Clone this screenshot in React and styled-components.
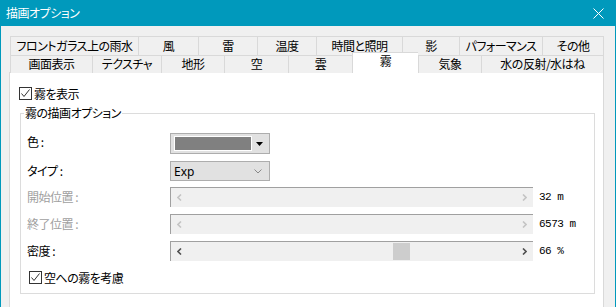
import React from 'react';
import styled, { createGlobalStyle } from 'styled-components';

const Global = createGlobalStyle`
  html, body {
    margin: 0;
    background: #f0f0f0;
  }
  body {
    font-family: "Noto Sans CJK JP", "Noto Sans", sans-serif;
    font-size: 12px;
    font-feature-settings: "palt";
    letter-spacing: -0.5px;
    color: #000;
  }
`;

const Window = styled.div`
  width: 616px;
  height: 307px;
  box-sizing: border-box;
  border-left: 1px solid #0099bc;
  border-right: 1px solid #0099bc;
  background: #f0f0f0;
  display: flex;
  flex-direction: column;
  overflow: hidden;
`;

const TitleBar = styled.div`
  height: 26px;
  flex: none;
  background: #0099bc;
  color: #fff;
  display: flex;
  align-items: center;
  justify-content: space-between;
  padding: 0 11px 0 5px;
  line-height: 14px;
`;

const Body = styled.div`
  flex: 1;
  display: flex;
  flex-direction: column;
  padding: 10px 11px 0 8px;
`;

const TabRow = styled.div`
  display: flex;
  align-items: flex-start;
  height: ${p => p.$h}px;
  margin-left: 1px;
  position: relative;
  z-index: ${p => p.$front ? 1 : 0};
`;

const Tab = styled.div`
  box-sizing: border-box;
  width: ${p => p.$w}px;
  height: ${p => p.$selected ? p.$h + 4 : p.$h + 1}px;
  margin-top: ${p => p.$selected ? -3 : 0}px;
  border-top: 1px solid #d9d9d9;
  border-left: 1px solid #d9d9d9;
  border-right: ${p => p.$last ? '1px solid #d9d9d9' : 'none'};
  background: ${p => p.$selected ? '#fff' : '#f0f0f0'};
  display: flex;
  justify-content: center;
  align-items: ${p => p.$selected ? 'flex-start' : 'center'};
  padding-top: ${p => p.$selected ? 1 : 0}px;
  padding-bottom: ${p => p.$selected ? 0 : 1}px;
  line-height: 14px;
  white-space: nowrap;
  position: relative;
  z-index: ${p => p.$selected ? 2 : 0};
`;

const Panel = styled.div`
  flex: 1;
  background: #fff;
  border: 1px solid #d9d9d9;
  border-bottom: none;
  padding: 14px 8px 0 9px;
`;

const CheckRow = styled.label`
  display: flex;
  align-items: center;
  height: 13px;
  gap: 2px;
  line-height: 14px;
  margin-top: ${p => p.$mt || 0}px;
  margin-left: ${p => p.$ml || 0}px;
`;

const Box = styled.span`
  width: 13px;
  height: 13px;
  box-sizing: border-box;
  border: 1px solid #333;
  background: #fff;
  display: flex;
  align-items: center;
  justify-content: center;
`;

const Group = styled.fieldset`
  margin: 6px 0 0 1px;
  padding: 0 6px 9px 6px;
  border: 1px solid #dcdcdc;
  min-width: 0;
`;

const Legend = styled.legend`
  padding: 0 1px;
  margin-left: -3px;
  line-height: 14px;
`;

const FormRow = styled.div`
  display: flex;
  align-items: center;
  height: ${p => p.$h}px;
  margin-top: ${p => p.$mt}px;
`;

const Label = styled.div`
  width: 143px;
  flex: none;
  line-height: 14px;
  color: ${p => p.$disabled ? '#a0a0a0' : '#000'};
  margin-top: ${p => p.$up ? -4 : 0}px;
`;

const ColorButton = styled.div`
  box-sizing: border-box;
  width: 100px;
  height: 21px;
  border: 1px solid #adadad;
  background: #e1e1e1;
  display: flex;
  align-items: center;
  padding-left: 3px;
  gap: 4px;
`;

const Swatch = styled.div`
  width: 76px;
  height: 13px;
  border: 1px solid #fff;
  background: ${p => p.$color};
`;

const Select = styled.div`
  box-sizing: border-box;
  width: 100px;
  height: 20px;
  border: 1px solid #adadad;
  background: #e1e1e1;
  display: flex;
  align-items: center;
  justify-content: space-between;
  padding: 0 7px 0 3px;
  font-family: "Noto Sans", "Liberation Sans", sans-serif;
  font-size: 12px;
  letter-spacing: 0;
`;

const Track = styled.div`
  box-sizing: border-box;
  width: 363px;
  height: 20px;
  background: #f0f0f0;
  border-top: 1px solid #a0a0a0;
  border-left: 1px solid #a0a0a0;
  display: flex;
  align-items: center;
`;

const Arrow = styled.div`
  width: 17px;
  height: 19px;
  flex: none;
  display: flex;
  align-items: center;
  justify-content: center;
`;

const Rail = styled.div`
  flex: 1;
  height: 19px;
  position: relative;
`;

const Thumb = styled.div`
  position: absolute;
  top: 1px;
  width: 17px;
  height: 17px;
  background: #cdcdcd;
`;

const Value = styled.div`
  margin-left: 6px;
  font-family: "Liberation Mono", "DejaVu Sans Mono", monospace;
  font-size: 11px;
  letter-spacing: -0.5px;
  white-space: pre;
`;

const Check = () => (
  <Box>
    <svg width="11" height="11" viewBox="0 0 11 11">
      <path d="M1.5 5.5 L4 8.5 L9.5 1.5" fill="none" stroke="#333" strokeWidth="1" />
    </svg>
  </Box>
);

const Chevron = ({ dir, color }) => (
  <svg width="5" height="7" viewBox="0 0 5 7">
    <path
      d={dir === 'left' ? 'M4 0.5 L1 3.5 L4 6.5' : 'M1 0.5 L4 3.5 L1 6.5'}
      fill="none"
      stroke={color}
      strokeWidth="1.6"
    />
  </svg>
);

const Slider = ({ value, disabled }) => {
  const c = disabled ? '#c4c4c4' : '#505050';
  return (
    <Track>
      <Arrow><Chevron dir="left" color={c} /></Arrow>
      <Rail>
        {value != null && (
          <Thumb style={{ left: `calc((100% - 17px) * ${value / 100})` }} />
        )}
      </Rail>
      <Arrow><Chevron dir="right" color={c} /></Arrow>
    </Track>
  );
};

const backTabs = [
  ['フロントガラス上の雨水', 128],
  ['風', 60],
  ['雷', 59],
  ['温度', 59],
  ['時間と照明', 86],
  ['影', 57],
  ['パフォーマンス', 83],
  ['その他', 62],
];

const frontTabs = [
  ['画面表示', 82],
  ['テクスチャ', 69],
  ['地形', 63],
  ['空', 64],
  ['雲', 64],
  ['霧', 66],
  ['気象', 63],
  ['水の反射/水はね', 123],
];

const sliders = [
  { label: '開始位置 :', value: '32 m', disabled: true, mt: 6 },
  { label: '終了位置 :', value: '6573 m', disabled: true, mt: 7 },
  { label: '密度 :', value: '66 %', thumb: 66, mt: 7 },
];

export default function App() {
  return (
    <>
      <Global />
      <Window>
        <TitleBar>
          <span>描画オプション</span>
          <svg width="11" height="11" viewBox="0 0 11 11">
            <path d="M0.5 0.5 L10.5 10.5 M10.5 0.5 L0.5 10.5" stroke="#fff" strokeWidth="1" />
          </svg>
        </TitleBar>
        <Body>
          <TabRow $h={19}>
            {backTabs.map(([name, w], i) => (
              <Tab key={name} $w={w} $h={19} $last={i === backTabs.length - 1}>{name}</Tab>
            ))}
          </TabRow>
          <TabRow $h={17} $front>
            {frontTabs.map(([name, w], i) => (
              <Tab key={name} $w={w} $h={17} $last={i === frontTabs.length - 1} $selected={name === '霧'}>
                {name}
              </Tab>
            ))}
          </TabRow>
          <Panel>
            <CheckRow><Check />霧を表示</CheckRow>
            <Group>
              <Legend>霧の描画オプション</Legend>
              <FormRow $h={21} $mt={13}>
                <Label $up>色 :</Label>
                <ColorButton>
                  <Swatch $color="#808080" />
                  <svg width="7" height="4" viewBox="0 0 7 4">
                    <path d="M0 0 H7 L3.5 4 Z" fill="#000" />
                  </svg>
                </ColorButton>
              </FormRow>
              <FormRow $h={20} $mt={7}>
                <Label>タイプ :</Label>
                <Select>
                  <span>Exp</span>
                  <svg width="8" height="5" viewBox="0 0 8 5">
                    <path d="M0.5 0.5 L4 4 L7.5 0.5" fill="none" stroke="#888" strokeWidth="1" />
                  </svg>
                </Select>
              </FormRow>
              {sliders.map(s => (
                <FormRow key={s.label} $h={20} $mt={s.mt}>
                  <Label $disabled={s.disabled}>{s.label}</Label>
                  <Slider value={s.thumb} disabled={s.disabled} />
                  <Value>{s.value}</Value>
                </FormRow>
              ))}
              <CheckRow $mt={10} $ml={2}><Check />空への霧を考慮</CheckRow>
            </Group>
          </Panel>
        </Body>
      </Window>
    </>
  );
}
